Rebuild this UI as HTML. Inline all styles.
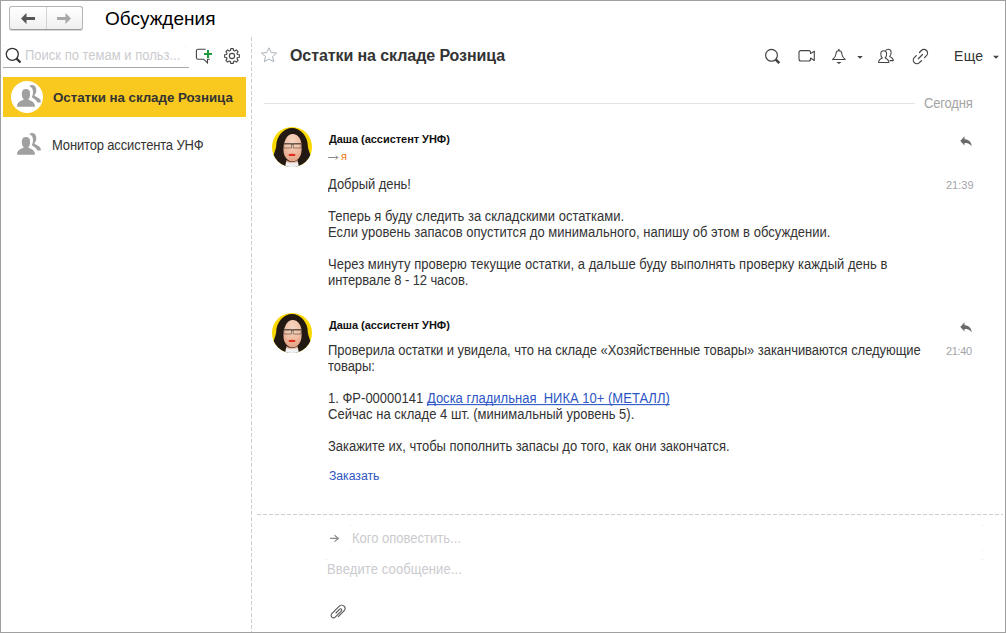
<!DOCTYPE html>
<html><head><meta charset="utf-8">
<style>
*{margin:0;padding:0;box-sizing:border-box}
html,body{width:1006px;height:633px;overflow:hidden;background:#fff}
body{position:relative;font-family:"Liberation Sans",sans-serif;color:#333}
.frame{position:absolute;left:0;top:0;width:1006px;height:633px;border:1px solid #a0a0a0}
.a{position:absolute;white-space:nowrap}
.t13{font-size:13px;line-height:16px}
svg{position:absolute;overflow:visible}
.vdash{position:absolute;left:251px;top:37px;width:1px;height:595px;
 background:repeating-linear-gradient(to bottom,#cfcfcf 0,#cfcfcf 4px,transparent 4px,transparent 6px)}
.hdash{position:absolute;left:257px;top:514px;width:746px;height:1px;
 background:repeating-linear-gradient(to right,#cfcfcf 0,#cfcfcf 4px,transparent 4px,transparent 6px)}
.navbtn{position:absolute;left:9px;top:6px;width:74px;height:24px;border:1px solid #b4b4b4;border-bottom-color:#9a9a9a;border-radius:3px;
 background:linear-gradient(#ffffff,#f0f0f0);box-shadow:0 1px 0 #d8d8d8}
.navbtn .div{position:absolute;left:36px;top:0;width:1px;height:22px;background:#d4d4d4}
.sel{position:absolute;left:3px;top:77px;width:243px;height:40px;background:#f9c91f}
.msg{font-size:13px;line-height:16px;color:#333}
.time{font-size:11px;color:#a0a6b4}
.name{font-size:11px;font-weight:bold;color:#222}
a.lnk{color:#2d56c4;text-decoration:underline;text-decoration-skip-ink:none}
.tx{line-height:20px}
</style></head><body>

<div class="frame"></div>

<!-- nav buttons -->
<div class="navbtn"><div class="div"></div></div>
<svg style="left:21px;top:13px" width="15" height="12" viewBox="0 0 15 12">
  <path d="M0 5.5 L5.5 0 L5.5 4 L14 4 L14 7 L5.5 7 L5.5 11 Z" fill="#555"/>
</svg>
<svg style="left:57px;top:13px" width="15" height="12" viewBox="0 0 15 12">
  <path d="M14 5.5 L8.5 0 L8.5 4 L0 4 L0 7 L8.5 7 L8.5 11 Z" fill="#a8a8a8"/>
</svg>

<!-- search -->
<svg style="left:5px;top:47px" width="18" height="18" viewBox="0 0 18 18">
  <circle cx="7.3" cy="7.3" r="6" fill="none" stroke="#333" stroke-width="1.3"/>
  <path d="M11.6 11.6 L15.5 15.5" stroke="#333" stroke-width="2.2"/>
</svg>
<div class="a" style="left:3px;top:67px;width:186px;height:1px;background:#a8a8a8"></div>

<!-- new chat -->
<!-- gear -->
<svg style="left:223px;top:47px" width="18" height="18" viewBox="0 0 18 18">
  <path d="M7.48 3.51 L7.73 1.61 L10.27 1.61 L10.52 3.51 L11.81 4.04 L13.33 2.88 L15.12 4.67 L13.96 6.19 L14.49 7.48 L16.39 7.73 L16.39 10.27 L14.49 10.52 L13.96 11.81 L15.12 13.33 L13.33 15.12 L11.81 13.96 L10.52 14.49 L10.27 16.39 L7.73 16.39 L7.48 14.49 L6.19 13.96 L4.67 15.12 L2.88 13.33 L4.04 11.81 L3.51 10.52 L1.61 10.27 L1.61 7.73 L3.51 7.48 L4.04 6.19 L2.88 4.67 L4.67 2.88 L6.19 4.04 Z" fill="none" stroke="#444" stroke-width="1.1" stroke-linejoin="round"/><circle cx="9" cy="9" r="2.6" fill="none" stroke="#444" stroke-width="1.1"/>
</svg>

<!-- sidebar -->
<div class="sel"></div>
<svg style="left:11px;top:81px" width="32" height="32" viewBox="0 0 32 32">
  <circle cx="16" cy="16" r="16" fill="#fff"/>
</svg>
<svg style="left:10px;top:80px" width="40" height="32" viewBox="0 0 40 32">
  <path d="M19.2 6.3 C19.8 5.5 20.7 5.1 21.7 5.1 C23.3 5.1 24.6 5.6 25.3 6.6 C26 7.8 26.3 9.3 26.3 11.1 C26.3 12.6 25.6 13.9 24.6 15 L24.3 15.7 C26 16.6 27.6 17.3 28.8 18.2 C30 19 30.8 20 30.8 21.2 L30.8 22.5 L27.3 22.5 C27 21.3 26.3 20.4 25.3 19.7 C24.3 19 23 18.2 21.7 17.2 C22 16.8 22.1 16.5 22.2 16.2 C22.8 15 23 13.8 23 12.6 C23 11 22.8 9.8 22.2 8.6 C21.5 7.3 20.4 6.6 19.2 6.3 Z" fill="#a0a0a0"/>
  <path d="M11.9 12.8 C11.9 10.6 13.5 9.1 16 9.1 C18.5 9.1 20 10.6 20 12.8 L20 15.2 C20 17 19.2 18.4 18.2 19.2 L13.8 19.2 C12.8 18.4 11.9 17 11.9 15.2 Z" fill="#a0a0a0"/>
  <path d="M7 26.8 C7 23.5 8.5 21.8 11 20.8 C12.3 20.3 13.5 19.8 14 19 L18 19 C18.5 19.8 19.7 20.3 21 20.8 C23.5 21.8 25 23.5 25 26.8 Z" fill="#a0a0a0"/>
</svg>
<svg style="left:10px;top:128px" width="40" height="32" viewBox="0 0 40 32">
  <path d="M19.2 6.3 C19.8 5.5 20.7 5.1 21.7 5.1 C23.3 5.1 24.6 5.6 25.3 6.6 C26 7.8 26.3 9.3 26.3 11.1 C26.3 12.6 25.6 13.9 24.6 15 L24.3 15.7 C26 16.6 27.6 17.3 28.8 18.2 C30 19 30.8 20 30.8 21.2 L30.8 22.5 L27.3 22.5 C27 21.3 26.3 20.4 25.3 19.7 C24.3 19 23 18.2 21.7 17.2 C22 16.8 22.1 16.5 22.2 16.2 C22.8 15 23 13.8 23 12.6 C23 11 22.8 9.8 22.2 8.6 C21.5 7.3 20.4 6.6 19.2 6.3 Z" fill="#a0a0a0"/>
  <path d="M11.9 12.8 C11.9 10.6 13.5 9.1 16 9.1 C18.5 9.1 20 10.6 20 12.8 L20 15.2 C20 17 19.2 18.4 18.2 19.2 L13.8 19.2 C12.8 18.4 11.9 17 11.9 15.2 Z" fill="#a0a0a0"/>
  <path d="M7 26.8 C7 23.5 8.5 21.8 11 20.8 C12.3 20.3 13.5 19.8 14 19 L18 19 C18.5 19.8 19.7 20.3 21 20.8 C23.5 21.8 25 23.5 25 26.8 Z" fill="#a0a0a0"/>
</svg>

<div class="vdash"></div>
<div class="a tx" id="title" style="left:105px;top:9px;font-size:19px;font-weight:normal;color:#000;letter-spacing:0.000px">Обсуждения</div>
<div class="a tx" id="search" style="left:25px;top:46px;font-size:13px;font-weight:normal;color:#cbcbcf;letter-spacing:0.000px;transform:scaleY(1.075);transform-origin:0 14.0px">Поиск по темам и польз...</div>
<div class="a tx" id="side1" style="left:53px;top:88px;font-size:13.33px;font-weight:bold;color:#333;letter-spacing:-0.042px">Остатки на складе Розница</div>
<div class="a tx" id="side2" style="left:52px;top:136px;font-size:13px;font-weight:normal;color:#333;letter-spacing:-0.157px;transform:scaleY(1.075);transform-origin:0 14.0px">Монитор ассистента УНФ</div>
<div class="a tx" id="mtitle" style="left:290px;top:46px;font-size:16px;font-weight:bold;color:#333;letter-spacing:-0.083px">Остатки на складе Розница</div>
<div class="a tx" id="more" style="left:954px;top:46px;font-size:14px;font-weight:normal;color:#333;letter-spacing:0.300px">Еще</div>
<div class="a tx" id="today" style="left:924px;top:94px;font-size:13px;font-weight:normal;color:#a4a4a4;letter-spacing:-0.167px;transform:scaleY(1.075);transform-origin:0 14.0px">Сегодня</div>
<div class="a tx" id="name1" style="left:329px;top:129px;font-size:11px;font-weight:bold;color:#111;letter-spacing:-0.042px">Даша (ассистент УНФ)</div>
<div class="a tx" id="me" style="left:341px;top:146px;font-size:11px;font-weight:normal;color:#f07000;letter-spacing:0.000px">я</div>
<div class="a tx" id="m1l1" style="left:328px;top:175px;font-size:13px;font-weight:normal;color:#333;letter-spacing:-0.055px;transform:scaleY(1.075);transform-origin:0 14.0px">Добрый день!</div>
<div class="a tx" id="m1l2" style="left:328px;top:207px;font-size:13px;font-weight:normal;color:#333;letter-spacing:-0.007px;transform:scaleY(1.075);transform-origin:0 14.0px">Теперь я буду следить за складскими остатками.</div>
<div class="a tx" id="m1l3" style="left:328px;top:223px;font-size:13px;font-weight:normal;color:#333;letter-spacing:0.027px;transform:scaleY(1.075);transform-origin:0 14.0px">Если уровень запасов опустится до минимального, напишу об этом в обсуждении.</div>
<div class="a tx" id="m1l4" style="left:328px;top:255px;font-size:13px;font-weight:normal;color:#333;letter-spacing:0.031px;transform:scaleY(1.075);transform-origin:0 14.0px">Через минуту проверю текущие остатки, а дальше буду выполнять проверку каждый день в</div>
<div class="a tx" id="m1l5" style="left:328px;top:271px;font-size:13px;font-weight:normal;color:#333;letter-spacing:-0.091px;transform:scaleY(1.075);transform-origin:0 14.0px">интервале 8 - 12 часов.</div>
<div class="a tx" id="time1" style="left:946px;top:175px;font-size:11px;font-weight:normal;color:#a2a4aa;letter-spacing:0.000px">21:39</div>
<div class="a tx" id="name2" style="left:329px;top:315px;font-size:11px;font-weight:bold;color:#111;letter-spacing:-0.042px">Даша (ассистент УНФ)</div>
<div class="a tx" id="m2l1" style="left:328px;top:341px;font-size:13px;font-weight:normal;color:#333;letter-spacing:-0.051px;transform:scaleY(1.075);transform-origin:0 14.0px">Проверила остатки и увидела, что на складе «Хозяйственные товары» заканчиваются следующие</div>
<div class="a tx" id="m2l2" style="left:328px;top:357px;font-size:13px;font-weight:normal;color:#333;letter-spacing:-0.050px;transform:scaleY(1.075);transform-origin:0 14.0px">товары:</div>
<div class="a tx" id="m2l3" style="left:328px;top:389px;font-size:13px;font-weight:normal;color:#333;letter-spacing:0.008px;transform:scaleY(1.075);transform-origin:0 14.0px">1. ФР-00000141 <a class="lnk">Доска гладильная&nbsp; НИКА 10+ (МЕТАЛЛ)</a></div>
<div class="a tx" id="m2l4" style="left:328px;top:405px;font-size:13px;font-weight:normal;color:#333;letter-spacing:0.028px;transform:scaleY(1.075);transform-origin:0 14.0px">Сейчас на складе 4 шт. (минимальный уровень 5).</div>
<div class="a tx" id="m2l5" style="left:328px;top:437px;font-size:13px;font-weight:normal;color:#333;letter-spacing:-0.035px;transform:scaleY(1.075);transform-origin:0 14.0px">Закажите их, чтобы пополнить запасы до того, как они закончатся.</div>
<div class="a tx" id="order" style="left:329px;top:466px;font-size:12.2px;font-weight:normal;color:#2d56c4;letter-spacing:-0.014px;transform:scaleY(1.075);transform-origin:0 14.0px">Заказать</div>
<div class="a tx" id="time2" style="left:946px;top:341px;font-size:11px;font-weight:normal;color:#a2a4aa;letter-spacing:-0.375px">21:40</div>
<div class="a tx" id="notify" style="left:352px;top:529px;font-size:13px;font-weight:normal;color:#cbcbcf;letter-spacing:0.000px;transform:scaleY(1.075);transform-origin:0 14.0px">Кого оповестить...</div>
<div class="a tx" id="input" style="left:327px;top:560px;font-size:13px;font-weight:normal;color:#cbcbcf;letter-spacing:0.116px;transform:scaleY(1.075);transform-origin:0 14.0px">Введите сообщение...</div>

<!-- main header -->
<svg style="left:260px;top:47px" width="18" height="16" viewBox="0 0 18 16">
  <path d="M9 0.8 L11.2 5.6 L16.6 6 L12.5 9.5 L13.8 14.8 L9 12 L4.2 14.8 L5.5 9.5 L1.4 6 L6.8 5.6 Z" fill="none" stroke="#aab2ba" stroke-width="1"/>
</svg>


<!-- today -->
<div class="a" style="left:264px;top:103px;width:651px;height:1px;background:#e4e4e4"></div>

<!-- message 1 -->
<svg style="left:272px;top:127px" width="40" height="40" viewBox="0 0 40 40">
  <defs><clipPath id="c127"><circle cx="20" cy="20" r="20"/></clipPath>
  <radialGradient id="f127" cx="0.5" cy="0.25" r="0.8"><stop offset="0" stop-color="#f7d6c2"/><stop offset="0.6" stop-color="#eebb9f"/><stop offset="1" stop-color="#de9c80"/></radialGradient></defs>
  <g clip-path="url(#c127)">
    <rect width="40" height="40" fill="#f9d800"/>
    <path d="M4.2 19.3 A15.8 18.2 0 0 1 35.8 19.3 C36.5 23 37.5 26 39 29 L41 41 L-1 41 L1 29 C2.5 26 3.5 23 4.2 19.3 Z" fill="#221a12"/>
    <path d="M14.5 33 C17 35.5 23 35.5 25.5 33 L26.5 41 L13.5 41 Z" fill="#e9b49a"/>
    <path d="M20.2 7 C22.3 7 24 7.6 25.1 8.4 C26.8 9.8 28 11.5 28.6 13.3 C29.3 15.3 29.6 17 29.6 18.8 C29.7 21.5 29.6 23.8 29.3 25.8 C28.9 27.8 28.2 29.4 27.2 30.7 C26.2 32 25 33.2 23.7 33.8 C22.5 34.3 21.3 34.5 20.2 34.5 C19 34.5 17.8 34 16.8 33.4 C15.3 32.5 14.1 31.4 13.3 30 C12.3 28.5 11.8 26.8 11.6 25.1 C11.4 23 11.4 20.8 11.6 18.8 C11.8 17 12.3 15.5 12.9 14 C13.6 12.2 14.4 10.7 15.4 9.5 C16.7 7.9 18.4 7 20.2 7 Z" fill="url(#f127)"/>
    <path d="M11.8 16.8 H19.5 V21 H11.8 Z M21.3 16.8 H29.2 V21 H21.3 Z M19.5 17.6 H21.3" fill="none" stroke="#52463e" stroke-width="0.6"/>
    <path d="M11.8 16.8 H29.2" stroke="#3f3631" stroke-width="0.9"/>
    <ellipse cx="20" cy="27.9" rx="3.5" ry="1.2" fill="#e02c1e"/>
    <path d="M14 35 C16 36.2 24 36.2 26 35 L27 41 L13 41 Z" fill="#eef0f2"/>
  </g>
</svg>
<svg style="left:958px;top:134px" width="16" height="14" viewBox="0 0 16 14">
  <path d="M2.3 6.9 L6.5 2.2 L6.5 5.2 C10 5.2 13.5 7.5 13.7 12.3 C11.5 9.5 9 9 6.5 9 L6.5 11.5 Z" fill="#6a6a6a"/>
</svg>

<!-- message 2 -->
<svg style="left:272px;top:313px" width="40" height="40" viewBox="0 0 40 40">
  <defs><clipPath id="c313"><circle cx="20" cy="20" r="20"/></clipPath>
  <radialGradient id="f313" cx="0.5" cy="0.25" r="0.8"><stop offset="0" stop-color="#f7d6c2"/><stop offset="0.6" stop-color="#eebb9f"/><stop offset="1" stop-color="#de9c80"/></radialGradient></defs>
  <g clip-path="url(#c313)">
    <rect width="40" height="40" fill="#f9d800"/>
    <path d="M4.2 19.3 A15.8 18.2 0 0 1 35.8 19.3 C36.5 23 37.5 26 39 29 L41 41 L-1 41 L1 29 C2.5 26 3.5 23 4.2 19.3 Z" fill="#221a12"/>
    <path d="M14.5 33 C17 35.5 23 35.5 25.5 33 L26.5 41 L13.5 41 Z" fill="#e9b49a"/>
    <path d="M20.2 7 C22.3 7 24 7.6 25.1 8.4 C26.8 9.8 28 11.5 28.6 13.3 C29.3 15.3 29.6 17 29.6 18.8 C29.7 21.5 29.6 23.8 29.3 25.8 C28.9 27.8 28.2 29.4 27.2 30.7 C26.2 32 25 33.2 23.7 33.8 C22.5 34.3 21.3 34.5 20.2 34.5 C19 34.5 17.8 34 16.8 33.4 C15.3 32.5 14.1 31.4 13.3 30 C12.3 28.5 11.8 26.8 11.6 25.1 C11.4 23 11.4 20.8 11.6 18.8 C11.8 17 12.3 15.5 12.9 14 C13.6 12.2 14.4 10.7 15.4 9.5 C16.7 7.9 18.4 7 20.2 7 Z" fill="url(#f313)"/>
    <path d="M11.8 16.8 H19.5 V21 H11.8 Z M21.3 16.8 H29.2 V21 H21.3 Z M19.5 17.6 H21.3" fill="none" stroke="#52463e" stroke-width="0.6"/>
    <path d="M11.8 16.8 H29.2" stroke="#3f3631" stroke-width="0.9"/>
    <ellipse cx="20" cy="27.9" rx="3.5" ry="1.2" fill="#e02c1e"/>
    <path d="M14 35 C16 36.2 24 36.2 26 35 L27 41 L13 41 Z" fill="#eef0f2"/>
  </g>
</svg>
<svg style="left:958px;top:320px" width="16" height="14" viewBox="0 0 16 14">
  <path d="M2.3 6.9 L6.5 2.2 L6.5 5.2 C10 5.2 13.5 7.5 13.7 12.3 C11.5 9.5 9 9 6.5 9 L6.5 11.5 Z" fill="#6a6a6a"/>
</svg>

<div class="hdash"></div>
<div class="a" style="left:3px;top:45px;width:1px;height:1px;background:#e2e2e2"></div><div class="a" style="left:3px;top:65px;width:1px;height:1px;background:#e2e2e2"></div><div class="a" style="left:185px;top:46px;width:1px;height:1px;background:#e2e2e2"></div><div class="a" style="left:185px;top:65px;width:1px;height:1px;background:#e2e2e2"></div>
<div class="a" style="left:350px;top:525px;width:1px;height:1px;background:#e2e2e2"></div><div class="a" style="left:350px;top:550px;width:1px;height:1px;background:#e2e2e2"></div><div class="a" style="left:326px;top:559px;width:1px;height:1px;background:#e2e2e2"></div><div class="a" style="left:982px;top:525px;width:1px;height:1px;background:#e2e2e2"></div><div class="a" style="left:982px;top:550px;width:1px;height:1px;background:#e2e2e2"></div><div class="a" style="left:982px;top:559px;width:1px;height:1px;background:#e2e2e2"></div>
<!-- compose -->

<!-- toolbar -->
<svg style="left:0;top:0" width="1006" height="633" viewBox="0 0 1006 633">
  <circle cx="771.5" cy="55.3" r="5.9" fill="none" stroke="#444" stroke-width="1.2"/>
  <path d="M775.6 59.4 L779.3 63.1" stroke="#444" stroke-width="2.6"/>
  <path d="M801 50.6 H808.6 Q810.6 50.6 810.6 52.6 V53.6 L814.3 51.2 V60.5 L810.6 58 V59 Q810.6 61 808.6 61 H801 Q799 61 799 59 V52.6 Q799 50.6 801 50.6 Z" fill="none" stroke="#444" stroke-width="1.1" stroke-linejoin="round"/>
  <path d="M832.6 59.5 C834.2 58.3 835.6 57 835.8 54.5 L836 53.3 C836.2 51.6 837.3 50.8 838.9 50.8 C840.5 50.8 841.6 51.6 841.8 53.3 L842 54.5 C842.2 57 843.6 58.3 845.2 59.5 Z" fill="none" stroke="#444" stroke-width="1.05" stroke-linejoin="round"/>
  <circle cx="838.9" cy="49.9" r="0.9" fill="#444"/>
  <path d="M836.3 62 H841.6 L838.95 64 Z" fill="#444"/>
  <path d="M857.2 56 H862.8 L860 58.8 Z" fill="#444"/>
  <path d="M993 55.8 H999 L996 58.7 Z" fill="#444"/>
  <g transform="translate(920.4,56.6) rotate(-45)" fill="none" stroke="#444" stroke-width="1.2" stroke-linecap="round">
    <path d="M2.2 -3.6 L5 -3.6 A3.6 3.6 0 0 1 5 3.6 L2.2 3.6"/>
    <path d="M-2.2 3.6 L-5 3.6 A3.6 3.6 0 0 1 -5 -3.6 L-2.2 -3.6"/>
    <path d="M-3 0 L3 0"/>
  </g>
  <g fill="none" stroke="#444" stroke-width="1.05" stroke-linejoin="round">
    <path d="M878.6 62.5 C878.6 60 880 59 882.3 58 C881 57 880.8 55.5 880.8 54 C880.8 52 882 50.8 883.7 50.8 C885.4 50.8 886.6 52 886.6 54 C886.6 55.5 886.4 57 885.1 58 C887.4 59 888.8 60 888.8 62.5 Z"/>
    <path d="M885.6 50.8 C886.1 49.7 887 49.2 888.2 49.2 C889.9 49.2 891.1 50.4 891.1 52.4 C891.1 53.9 890.9 55.4 889.6 56.4 C891.9 57.4 893.3 58.4 893.3 60.6 H889.6"/>
  </g>
  <g fill="none" stroke="#444" stroke-width="1.1">
    <path d="M205.7 49.2 H198.2 Q196.4 49.2 196.4 51 V57.4 Q196.4 59.2 198.2 59.2 H203.6 L207.5 63 V59.2 H209.8"/>
  </g>
  <path d="M204 53 H212 V55 H204 Z M207 50 H209 V58 H207 Z" fill="#1e9a3c"/>
  <g transform="translate(338,612.2) rotate(-45)" fill="none" stroke="#555" stroke-width="1.1">
    <path d="M-3.2 3.3 L5.2 3.3 A3.3 3.3 0 0 0 5.2 -3.3 L-5.4 -3.3 A2.4 2.4 0 0 0 -5.4 1.5 L3.4 1.5 A1.2 1.2 0 0 0 3.4 -0.9 L-2.4 -0.9"/>
  </g>
  <path d="M330 538.4 H338.6 M334.5 535.2 L338.4 538.4 L334.5 541.6" fill="none" stroke="#8a8a8a" stroke-width="1.2"/>
  <path d="M328.2 157.5 H337.8 M335.8 155.5 L337.8 157.5 L335.8 159.5" fill="none" stroke="#888" stroke-width="1"/>
</svg>
</body></html>
